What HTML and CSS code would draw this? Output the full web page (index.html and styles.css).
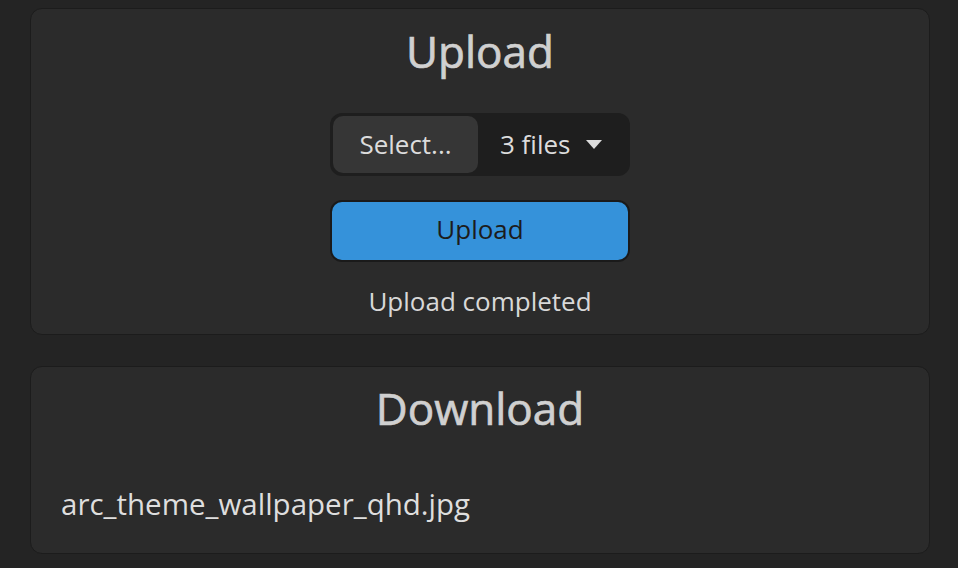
FILE: index.html
```html
<!DOCTYPE html>
<html lang="en">
<head>
<meta charset="utf-8">
<title>Upload / Download</title>
<link rel="stylesheet" href="styles.css">
</head>
<body>
  <main class="page">
    <section class="card card-upload">
      <h1 class="title">Upload</h1>
      <div class="picker">
        <button class="picker-select" type="button">Select...</button>
        <div class="picker-count">
          <span>3 files</span>
          <svg class="caret" width="16" height="9" viewBox="0 0 16 9" aria-hidden="true"><path d="M0 0H16L8 9Z" fill="#dcdcdc"/></svg>
        </div>
      </div>
      <button class="upload-btn" type="button">Upload</button>
      <p class="status">Upload completed</p>
    </section>
    <section class="card card-download">
      <h1 class="title">Download</h1>
      <p class="file">arc_theme_wallpaper_qhd.jpg</p>
    </section>
  </main>
</body>
</html>
```
FILE: styles.css
```css
html, body {
  margin: 0;
  padding: 0;
  background: #242424;
}
body {
  font-family: "Open Sans", "Noto Sans", sans-serif;
  color: #d8d8d8;
}
.page {
  display: flex;
  flex-direction: column;
  gap: 31px;
  padding: 8px 0 0 30px;
}
.card {
  box-sizing: border-box;
  width: 900px;
  background: #2b2b2b;
  border: 1px solid #1c1c1c;
  border-radius: 12px;
  display: flex;
  flex-direction: column;
}
.card-upload {
  align-items: center;
  padding: 16px 0 15px;
}
.card-download {
  padding: 15px 30px 31px;
}
.title {
  margin: 0;
  font-size: 44px;
  line-height: 52px;
  font-weight: 400;
  -webkit-text-stroke: 0.7px #d0d0d0;
  color: #d0d0d0;
  text-align: center;
}
.picker {
  margin-top: 36px;
  box-sizing: border-box;
  width: 300px;
  height: 63px;
  padding: 3px;
  background: #1e1e1e;
  border-radius: 12px;
  display: flex;
  align-items: stretch;
}
.picker-select {
  width: 145px;
  border: none;
  border-radius: 10px;
  background: #363636;
  color: #dcdcdc;
  font-family: inherit;
  font-size: 26px;
  padding: 0 0 2px;
}
.picker-count {
  flex: 1;
  display: flex;
  align-items: center;
  gap: 16px;
  padding: 0 0 2px 22px;
  font-size: 26px;
  color: #dcdcdc;
}
.caret {
  margin-top: 2px;
}
.upload-btn {
  margin-top: 24px;
  box-sizing: border-box;
  width: 300px;
  height: 62px;
  border: 2px solid #1a1a1a;
  border-radius: 12px;
  background: #3592da;
  color: #1c1c1c;
  font-family: inherit;
  font-size: 26px;
  padding: 0 0 5px;
}
.status {
  margin: 21px 0 0;
  font-size: 26px;
  line-height: 36px;
  color: #d8d8d8;
}
.file {
  margin: 52px 0 0;
  font-size: 29.5px;
  line-height: 36px;
  color: #dedede;
}
```
